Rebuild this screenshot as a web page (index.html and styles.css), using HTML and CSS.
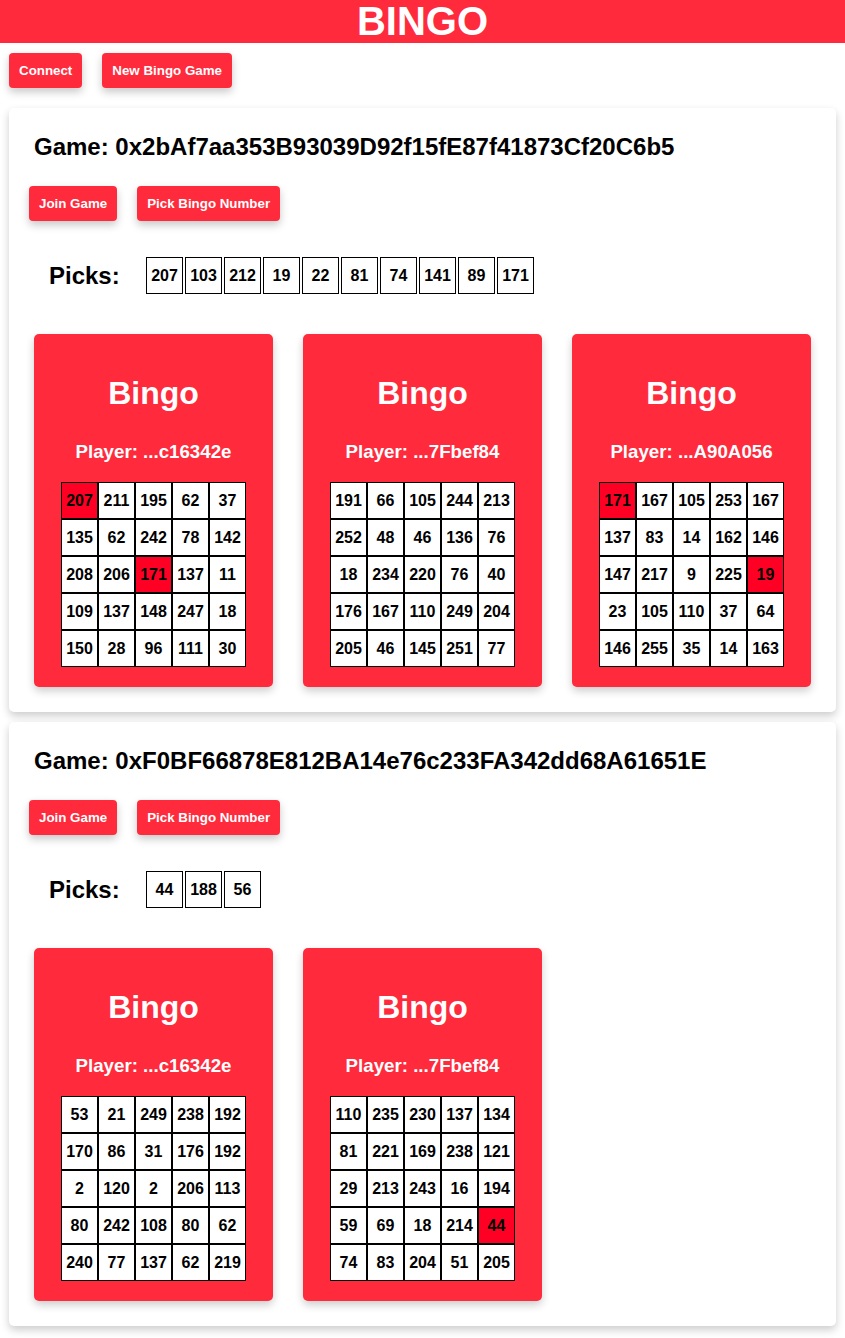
FILE: index.html
```html
<!DOCTYPE html>
<html lang="en">
<head>
<meta charset="utf-8">
<title>Bingo</title>
<link rel="stylesheet" href="styles.css">
</head>
<body>
<header class="topbar"><h1 class="brand">BINGO</h1></header>
<div class="toolbar">
  <button class="btn">Connect</button>
  <button class="btn">New Bingo Game</button>
</div>
<main class="games">
  <section class="game">
    <h2 class="game-title">Game: 0x2bAf7aa353B93039D92f15fE87f41873Cf20C6b5</h2>
    <div class="actions">
      <button class="btn">Join Game</button>
      <button class="btn">Pick Bingo Number</button>
    </div>
    <div class="picks">
      <span class="picks-label">Picks:</span>
      <div class="pick-list">
        <span class="pick">207</span><span class="pick">103</span><span class="pick">212</span><span class="pick">19</span><span class="pick">22</span><span class="pick">81</span><span class="pick">74</span><span class="pick">141</span><span class="pick">89</span><span class="pick">171</span>
      </div>
    </div>
    <div class="cards">
      <div class="card">
        <h3 class="card-title">Bingo</h3>
        <p class="player">Player: ...c16342e</p>
        <div class="board">
          <span class="cell hit">207</span><span class="cell">211</span><span class="cell">195</span><span class="cell">62</span><span class="cell">37</span>
          <span class="cell">135</span><span class="cell">62</span><span class="cell">242</span><span class="cell">78</span><span class="cell">142</span>
          <span class="cell">208</span><span class="cell">206</span><span class="cell hit">171</span><span class="cell">137</span><span class="cell">11</span>
          <span class="cell">109</span><span class="cell">137</span><span class="cell">148</span><span class="cell">247</span><span class="cell">18</span>
          <span class="cell">150</span><span class="cell">28</span><span class="cell">96</span><span class="cell">111</span><span class="cell">30</span>
        </div>
      </div>
      <div class="card">
        <h3 class="card-title">Bingo</h3>
        <p class="player">Player: ...7Fbef84</p>
        <div class="board">
          <span class="cell">191</span><span class="cell">66</span><span class="cell">105</span><span class="cell">244</span><span class="cell">213</span>
          <span class="cell">252</span><span class="cell">48</span><span class="cell">46</span><span class="cell">136</span><span class="cell">76</span>
          <span class="cell">18</span><span class="cell">234</span><span class="cell">220</span><span class="cell">76</span><span class="cell">40</span>
          <span class="cell">176</span><span class="cell">167</span><span class="cell">110</span><span class="cell">249</span><span class="cell">204</span>
          <span class="cell">205</span><span class="cell">46</span><span class="cell">145</span><span class="cell">251</span><span class="cell">77</span>
        </div>
      </div>
      <div class="card">
        <h3 class="card-title">Bingo</h3>
        <p class="player">Player: ...A90A056</p>
        <div class="board">
          <span class="cell hit">171</span><span class="cell">167</span><span class="cell">105</span><span class="cell">253</span><span class="cell">167</span>
          <span class="cell">137</span><span class="cell">83</span><span class="cell">14</span><span class="cell">162</span><span class="cell">146</span>
          <span class="cell">147</span><span class="cell">217</span><span class="cell">9</span><span class="cell">225</span><span class="cell hit">19</span>
          <span class="cell">23</span><span class="cell">105</span><span class="cell">110</span><span class="cell">37</span><span class="cell">64</span>
          <span class="cell">146</span><span class="cell">255</span><span class="cell">35</span><span class="cell">14</span><span class="cell">163</span>
        </div>
      </div>
    </div>
  </section>

  <section class="game">
    <h2 class="game-title">Game: 0xF0BF66878E812BA14e76c233FA342dd68A61651E</h2>
    <div class="actions">
      <button class="btn">Join Game</button>
      <button class="btn">Pick Bingo Number</button>
    </div>
    <div class="picks">
      <span class="picks-label">Picks:</span>
      <div class="pick-list">
        <span class="pick">44</span><span class="pick">188</span><span class="pick">56</span>
      </div>
    </div>
    <div class="cards">
      <div class="card">
        <h3 class="card-title">Bingo</h3>
        <p class="player">Player: ...c16342e</p>
        <div class="board">
          <span class="cell">53</span><span class="cell">21</span><span class="cell">249</span><span class="cell">238</span><span class="cell">192</span>
          <span class="cell">170</span><span class="cell">86</span><span class="cell">31</span><span class="cell">176</span><span class="cell">192</span>
          <span class="cell">2</span><span class="cell">120</span><span class="cell">2</span><span class="cell">206</span><span class="cell">113</span>
          <span class="cell">80</span><span class="cell">242</span><span class="cell">108</span><span class="cell">80</span><span class="cell">62</span>
          <span class="cell">240</span><span class="cell">77</span><span class="cell">137</span><span class="cell">62</span><span class="cell">219</span>
        </div>
      </div>
      <div class="card">
        <h3 class="card-title">Bingo</h3>
        <p class="player">Player: ...7Fbef84</p>
        <div class="board">
          <span class="cell">110</span><span class="cell">235</span><span class="cell">230</span><span class="cell">137</span><span class="cell">134</span>
          <span class="cell">81</span><span class="cell">221</span><span class="cell">169</span><span class="cell">238</span><span class="cell">121</span>
          <span class="cell">29</span><span class="cell">213</span><span class="cell">243</span><span class="cell">16</span><span class="cell">194</span>
          <span class="cell">59</span><span class="cell">69</span><span class="cell">18</span><span class="cell">214</span><span class="cell hit">44</span>
          <span class="cell">74</span><span class="cell">83</span><span class="cell">204</span><span class="cell">51</span><span class="cell">205</span>
        </div>
      </div>
    </div>
  </section>
</main>
</body>
</html>
```
FILE: styles.css
```css
* { box-sizing: content-box; }

body {
  margin: 0;
  background: #ffffff;
  font-family: "Liberation Sans", Arial, sans-serif;
  color: #000000;
}

.topbar {
  background: #ff2a3c;
  height: 43px;
}

.brand {
  margin: 0;
  font-size: 40px;
  line-height: 42px;
  font-weight: bold;
  color: #ffffff;
  text-align: center;
}

.toolbar {
  display: flex;
  gap: 20px;
  padding: 10px 9px 0;
}

.btn {
  font-family: "Liberation Sans", Arial, sans-serif;
  font-size: 13.333px;
  font-weight: bold;
  line-height: 15px;
  color: #ffffff;
  background: #ff2a3c;
  border: none;
  border-radius: 4px;
  padding: 10px 10px;
  box-shadow: 0 4px 8px rgba(0, 0, 0, 0.22);
  cursor: pointer;
}

.games {
  display: flex;
  flex-direction: column;
  gap: 10px;
  padding: 20px 9px 12px;
}

.game {
  background: #ffffff;
  border-radius: 5px;
  box-shadow: 0 4px 8px rgba(0, 0, 0, 0.2);
  padding: 25px 25px 25px 20px;
}

.game-title {
  margin: 0;
  padding-left: 5px;
  font-size: 24px;
  line-height: 28px;
  font-weight: bold;
}

.actions {
  display: flex;
  gap: 20px;
  margin-top: 25px;
}

.picks {
  display: flex;
  align-items: center;
  margin-top: 36px;
  padding-left: 20px;
}

.picks-label {
  flex: 0 0 96px;
  font-size: 24px;
  font-weight: bold;
  line-height: 28px;
}

.pick-list {
  display: flex;
}

.pick {
  width: 35px;
  height: 35px;
  margin: 0 1px;
  border: 1px solid #000000;
  display: flex;
  align-items: center;
  justify-content: center;
  font-size: 16px;
  font-weight: bold;
}

.cards {
  display: grid;
  grid-template-columns: repeat(3, 1fr);
  gap: 30px;
  margin: 40px 0 0 5px;
}

.card {
  background: #ff2a3c;
  border-radius: 5px;
  box-shadow: 0 4px 8px rgba(0, 0, 0, 0.2);
  padding: 41px 0 20px;
  display: flex;
  flex-direction: column;
  align-items: center;
  color: #ffffff;
}

.card-title {
  margin: 0;
  font-size: 32px;
  line-height: 37px;
  font-weight: bold;
}

.player {
  margin: 29px 0 0;
  font-size: 18.72px;
  line-height: 21px;
  font-weight: bold;
}

.board {
  display: grid;
  grid-template-columns: repeat(5, 37px);
  grid-auto-rows: 37px;
  margin-top: 20px;
  color: #000000;
}

.cell {
  background: #ffffff;
  border: 1px solid #000000;
  display: flex;
  align-items: center;
  justify-content: center;
  font-size: 16px;
  font-weight: bold;
}

.cell.hit {
  background: #ff0025;
}
```
